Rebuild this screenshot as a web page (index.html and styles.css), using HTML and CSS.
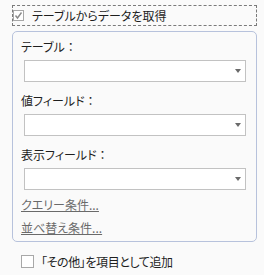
FILE: index.html
```html
<!DOCTYPE html>
<html lang="ja">
<head>
<meta charset="utf-8" />
<title>データ取得</title>
<link rel="stylesheet" href="styles.css">
</head>
<body>

<div class="source-row">
    <span class="check checked">
        <svg width="9" height="9" viewBox="0 0 9 9"><path d="M1.5 4.5 L3.5 7 L7.5 1.5" fill="none" stroke="#8a8a8a" stroke-width="1.4"/></svg>
    </span>
    <span class="caption">テーブルからデータを取得</span>
</div>

<div class="group">
    <div class="field">
        <div class="label">テーブル<span class="colon">：</span></div>
        <div class="combo"><span class="arrow"></span></div>
    </div>
    <div class="field">
        <div class="label">値フィールド<span class="colon">：</span></div>
        <div class="combo"><span class="arrow"></span></div>
    </div>
    <div class="field">
        <div class="label">表示フィールド<span class="colon">：</span></div>
        <div class="combo"><span class="arrow"></span></div>
    </div>
    <a class="link first" href="#">クエリー条件...</a>
    <a class="link" href="#">並べ替え条件...</a>
</div>

<div class="other-row">
    <span class="check big"></span>
    <span class="caption">「その他」を項目として追加</span>
</div>

</body>
</html>
```

FILE: styles.css
```css
body {
    margin: 0;
    background: #fafafa;
    color: #1e1e1e;
    font-family: "Noto Sans CJK JP", sans-serif;
    font-size: 12px;
    font-feature-settings: "palt";
    overflow: hidden;
}

.source-row {
    display: flex;
    align-items: center;
    margin: 5px 0 0 12px;
    width: 245px;
    height: 21px;
    box-sizing: border-box;
    border: 1px dashed #7a7a7a;
}

.check {
    display: flex;
    align-items: center;
    justify-content: center;
    width: 11px;
    height: 11px;
    box-sizing: border-box;
    border: 1px solid #a8a8a8;
    background: #fff;
}

.check.big {
    width: 13px;
    height: 13px;
}

.source-row .caption {
    margin-left: 8px;
    line-height: 16px;
}

.group {
    display: flex;
    flex-direction: column;
    margin: 5px 0 0 12px;
    width: 245px;
    box-sizing: border-box;
    padding: 7px 0 5px 8px;
    border: 1px solid #b7c2dc;
    border-radius: 5px;
}

.field {
    display: flex;
    flex-direction: column;
    margin-bottom: 11px;
}

.field:last-of-type {
    margin-bottom: 0;
}

.label {
    line-height: 16px;
    margin-bottom: 5px;
}

.colon {
    font-feature-settings: normal;
}

.combo {
    position: relative;
    margin-left: 3px;
    width: 222px;
    height: 22px;
    box-sizing: border-box;
    border: 1px solid #c2c2c2;
    background: #fff;
}

.arrow {
    position: absolute;
    right: 4px;
    top: 8px;
    width: 0;
    height: 0;
    border-left: 3.5px solid transparent;
    border-right: 3.5px solid transparent;
    border-top: 4px solid #6a6a6a;
}

.link {
    color: #6a6a6a;
    line-height: 16px;
    margin-top: 7px;
    align-self: flex-start;
}

.other-row {
    display: flex;
    align-items: center;
    margin-top: 11px;
    padding-left: 21px;
    height: 16px;
}

.other-row .caption {
    margin-left: 7px;
    letter-spacing: -0.4px;
}
```
